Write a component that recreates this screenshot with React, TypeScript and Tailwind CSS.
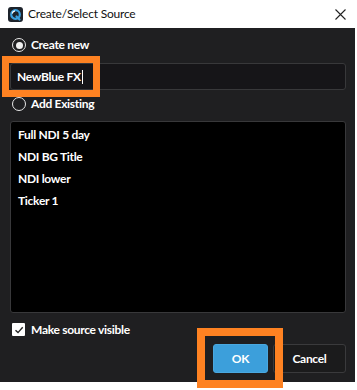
import React from "react";

function Radio({ checked }: { checked: boolean }) {
  return (
    <div className="w-[14px] h-[14px] rounded-full border-[1.5px] border-[#e8e8e8] flex items-center justify-center">
      {checked && <div className="w-[7px] h-[7px] rounded-full bg-[#f0f0f0]" />}
    </div>
  );
}

export default function App() {
  const items = ["Full NDI 5 day", "NDI BG Title", "NDI lower", "Ticker 1"];
  return (
    <div
      className="relative w-[357px] h-[390px] bg-white overflow-hidden"
      style={{ fontFamily: 'Lato, "Noto Sans", sans-serif' }}
    >
      {/* Title bar */}
      <div className="h-[28px] flex items-center pl-[8px] pr-[10px]">
        <svg width="15" height="15" viewBox="0 0 15 15">
          <rect x="0" y="0" width="15" height="15" rx="3" fill="#1d232b" />
          <circle cx="7.5" cy="7.5" r="4.3" fill="none" stroke="#3aa0e0" strokeWidth="2.2" />
          <path d="M8.5 9.5 L11.5 12.5" stroke="#3aa0e0" strokeWidth="2.2" strokeLinecap="round" />
          <path d="M4.2 6.5 A3.5 3.5 0 0 1 7 3.8" stroke="#ffffff" strokeWidth="1.2" fill="none" />
        </svg>
        <span className="ml-[5px] text-[12px] tracking-[-0.2px] text-[#111] leading-none">Create/Select Source</span>
        <div className="flex-1" />
        <svg width="11" height="11" viewBox="0 0 11 11" className="mr-[1px]">
          <path d="M0.5 0.5 L10.5 10.5 M10.5 0.5 L0.5 10.5" stroke="#222" strokeWidth="1.1" />
        </svg>
      </div>

      {/* Body */}
      <div className="w-[355px] h-[354px] bg-[#1f1f21] flex flex-col pl-[10px] pr-[9px] text-white font-bold text-[12px] tracking-[-0.3px]">
        <div className="flex items-center h-[14px] mt-[10px] pl-[2px]">
          <Radio checked />
          <span className="ml-[5px] leading-none">Create new</span>
        </div>
        <div className="mt-[11px] h-[27px] rounded-[3px] border border-[#38383a] bg-[#161518] flex items-center pl-[6px]">
          <span className="leading-none">NewBlue FX</span>
          <span className="w-px h-[14px] bg-white ml-[1px]" />
        </div>
        <div className="flex items-center h-[14px] mt-[7px] pl-[2px]">
          <Radio checked={false} />
          <span className="ml-[5px] leading-none">Add Existing</span>
        </div>
        <div className="mt-[10px] h-[192px] rounded-[3px] border border-[#38383a] bg-black flex flex-col pt-[2px] pl-[7px]">
          {items.map((t) => (
            <div key={t} className="h-[22px] flex items-center leading-none">
              {t}
            </div>
          ))}
        </div>
        <div className="flex items-center mt-[10px] pl-[2px] h-[13px]">
          <div className="w-[13px] h-[13px] bg-white rounded-[1px] flex items-center justify-center">
            <svg width="10" height="10" viewBox="0 0 10 10">
              <path d="M1.5 5.2 L4 7.6 L8.7 2.2" stroke="#222" strokeWidth="1.4" fill="none" />
            </svg>
          </div>
          <span className="ml-[6px] leading-none">Make source visible</span>
        </div>
        <div className="flex justify-end gap-[5px] mt-[8px]">
          <button className="w-[55px] h-[29px] rounded-[3px] bg-[#3c9fdb] border border-[#4aa8e0] text-white font-bold text-[12px]">
            OK
          </button>
          <button className="w-[73px] h-[29px] rounded-[3px] bg-[#1b1b1c] border border-[#3a3a3c] text-white font-bold text-[12px]">
            Cancel
          </button>
        </div>
      </div>

      {/* Orange highlight overlays */}
      <div className="absolute left-[2px] top-[56px] w-[98px] h-[41px] border-[7px] border-[#fe8222]" />
      <div className="absolute left-[197px] top-[328px] w-[86px] h-[60px] border-[8px] border-[#fe8222]" />
    </div>
  );
}
